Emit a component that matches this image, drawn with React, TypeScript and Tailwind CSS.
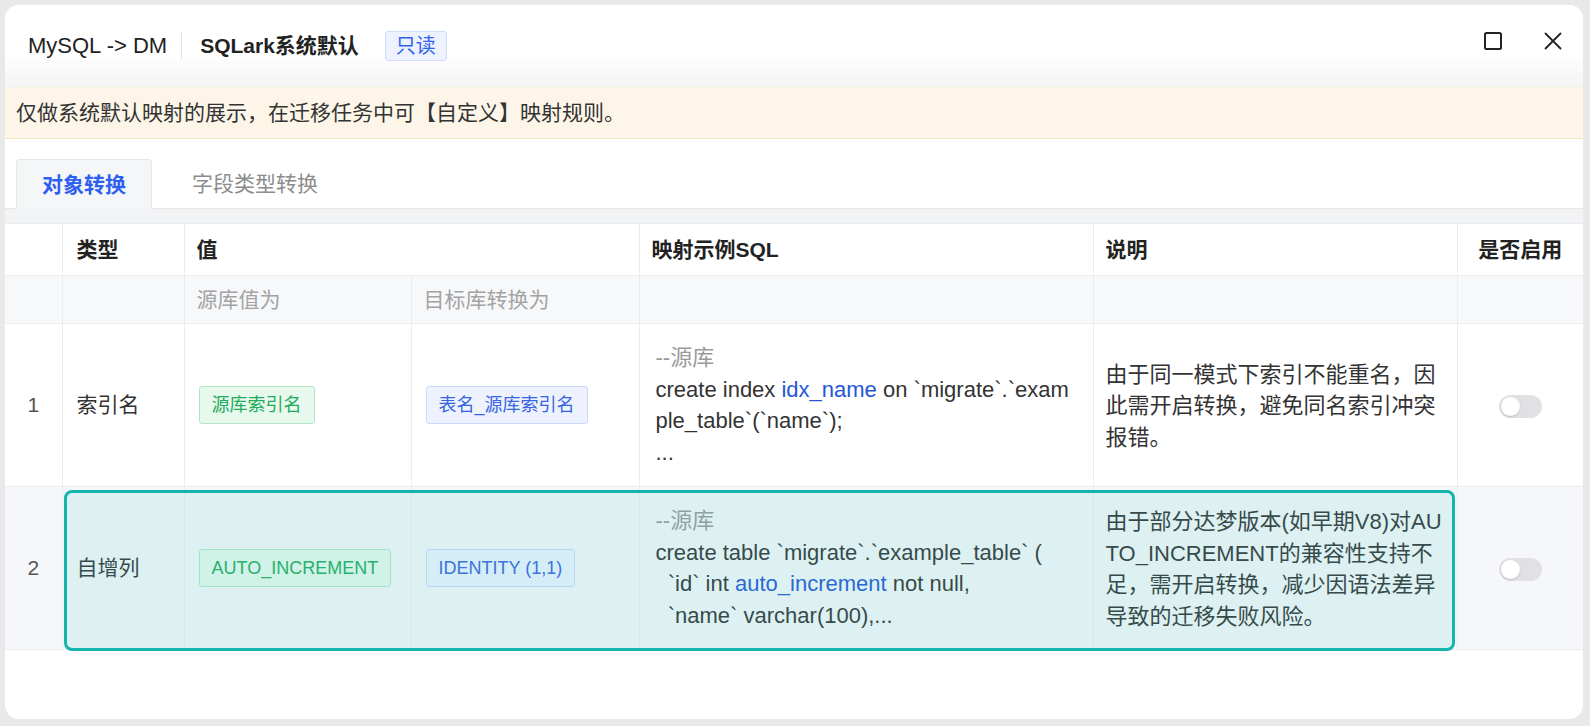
import type { ReactNode } from "react";

const line = "border-[#ebedf0]";

function Tag({ tone, children }: { readonly tone: "green" | "blue"; readonly children: ReactNode }) {
    const styles =
        tone === "green"
            ? "border-[#b1e6c5] bg-[#e7f8ed] text-[#22ab5c]"
            : "border-[#cbd9fa] bg-[#edf2fe] text-[#3764e0]";
    return (
        <span className={`inline-block rounded-[3px] border px-3 py-[5px] text-[18px] leading-[26px] ${styles}`}>
            {children}
        </span>
    );
}

function Toggle() {
    return (
        <span className="relative inline-block h-[23px] w-[43px] rounded-full bg-[#e1e1e4] align-middle">
            <span className="absolute left-[2px] top-[2px] h-[19px] w-[19px] rounded-full bg-white shadow-[0_1px_2px_rgba(0,0,0,0.15)]" />
        </span>
    );
}

function Kw({ children }: { readonly children: ReactNode }) {
    return <span className="text-[#2457d6]">{children}</span>;
}

type Row = {
    readonly index: string;
    readonly type: string;
    readonly source: string;
    readonly target: string;
    readonly sql: ReactNode[];
    readonly note: string;
    readonly hovered?: boolean;
};

const rows: Row[] = [
    {
        index: "1",
        type: "索引名",
        source: "源库索引名",
        target: "表名_源库索引名",
        sql: [
            <>
                create index <Kw>idx_name</Kw> on `migrate`.`example_table`(`name`);
            </>,
            "...",
        ],
        note: "由于同一模式下索引不能重名，因此需开启转换，避免同名索引冲突报错。",
    },
    {
        index: "2",
        type: "自增列",
        source: "AUTO_INCREMENT",
        target: "IDENTITY (1,1)",
        sql: [
            "create table `migrate`.`example_table` (",
            <>
                {"  `id` int "}
                <Kw>auto_increment</Kw> not null,
            </>,
            "  `name` varchar(100),...",
        ],
        note: "由于部分达梦版本(如早期V8)对AUTO_INCREMENT的兼容性支持不足，需开启转换，减少因语法差异导致的迁移失败风险。",
        hovered: true,
    },
];

export default function App() {
    return (
        <div className="h-[726px] w-full bg-[#e9e9e9] pb-[7px] pl-[5px] pr-[7px] pt-[5px] font-['Liberation_Sans','Noto_Sans_CJK_SC',sans-serif] text-[#333]">
            <div className="flex h-full flex-col overflow-hidden rounded-[14px] bg-white">
                {/* header */}
                <div className="flex h-[82px] shrink-0 items-center border-b border-[#efefef] bg-gradient-to-b from-white from-60% to-[#f4f4f4] pl-[23px] pr-[21px]">
                    <span className="text-[22px] text-[#222]">MySQL -&gt; DM</span>
                    <span className="ml-[14px] mr-[18px] h-[26px] w-px bg-[#e2e2e2]" />
                    <span className="text-[21px] font-bold text-[#222]">SQLark系统默认</span>
                    <span className="ml-[26px] rounded-[3px] border border-[#cfdcfb] bg-[#edf2fe] px-[10px] text-[20px] leading-[28px] text-[#2f63f0]">
                        只读
                    </span>
                    <div className="-mt-[9px] ml-auto flex items-center gap-[42px] text-[#222]">
                        <svg width="18" height="18" viewBox="0 0 18 18" fill="none">
                            <rect x="1" y="1" width="16" height="16" rx="1.5" stroke="currentColor" strokeWidth="2" />
                        </svg>
                        <svg width="18" height="18" viewBox="0 0 18 18" fill="none">
                            <path d="M1.5 1.5L16.5 16.5M16.5 1.5L1.5 16.5" stroke="currentColor" strokeWidth="1.8" strokeLinecap="round" />
                        </svg>
                    </div>
                </div>

                {/* notice */}
                <div className="flex h-[52px] shrink-0 items-center border-b border-[#f6e3c0] bg-[#fdf6e8] pl-[11px] text-[21px]">
                    仅做系统默认映射的展示，在迁移任务中可【自定义】映射规则。
                </div>

                {/* tabs */}
                <div className="mt-[20px] flex h-[50px] shrink-0 items-end border-b border-[#e6e6e6] pl-[11px]">
                    <div className="-mb-px flex h-[50px] w-[136px] items-center justify-center rounded-t-[4px] border border-b-0 border-[#e6e6e6] bg-[#f5f6f8] text-[21px] font-semibold text-[#2f5ff0]">
                        对象转换
                    </div>
                    <div className="ml-[14px] flex h-[49px] items-center px-[26px] text-[21px] text-[#8c8c8c]">
                        字段类型转换
                    </div>
                </div>
                <div className="h-[14px] shrink-0 bg-[#f2f3f5]" />

                {/* table */}
                <div className="relative">
                    <table className="w-full table-fixed border-collapse text-[21px]">
                        <colgroup>
                            <col className="w-[57px]" />
                            <col className="w-[122px]" />
                            <col className="w-[227px]" />
                            <col className="w-[228px]" />
                            <col className="w-[454px]" />
                            <col className="w-[364px]" />
                            <col />
                        </colgroup>
                        <thead>
                            <tr className={`h-[52px] border-t bg-white text-left font-bold text-[#222] ${line}`}>
                                <th className={`border-b border-r ${line}`} />
                                <th className={`border-b border-r px-[14px] ${line}`}>类型</th>
                                <th colSpan={2} className={`border-b border-r px-3 ${line}`}>
                                    值
                                </th>
                                <th className={`border-b border-r px-3 ${line}`}>映射示例SQL</th>
                                <th className={`border-b border-r px-3 ${line}`}>说明</th>
                                <th className={`border-b text-center ${line}`}>是否启用</th>
                            </tr>
                            <tr className="h-[48px] bg-[#f7f8fa] text-left font-normal text-[#a3a3a3]">
                                <th className={`border-b border-r ${line}`} />
                                <th className={`border-b border-r ${line}`} />
                                <th className={`border-b border-r px-3 font-normal ${line}`}>源库值为</th>
                                <th className={`border-b border-r px-3 font-normal ${line}`}>目标库转换为</th>
                                <th className={`border-b border-r ${line}`} />
                                <th className={`border-b border-r ${line}`} />
                                <th className={`border-b ${line}`} />
                            </tr>
                        </thead>
                        <tbody>
                            {rows.map((row) => (
                                <tr key={row.index} className={row.hovered ? "bg-[#f6f7fb]" : "bg-white"}>
                                    <td className={`border-b border-r text-center text-[#555] ${line}`}>{row.index}</td>
                                    <td className={`border-b border-r px-[14px] ${line}`}>{row.type}</td>
                                    <td className={`border-b border-r px-[14px] ${line}`}>
                                        <Tag tone="green">{row.source}</Tag>
                                    </td>
                                    <td className={`border-b border-r px-[14px] ${line}`}>
                                        <Tag tone="blue">{row.target}</Tag>
                                    </td>
                                    <td className={`border-b border-r px-4 py-[18px] text-[22px] leading-[31.5px] ${line}`}>
                                        <div className="text-[#9a9a9a]">--源库</div>
                                        {row.sql.map((part, i) => (
                                            <div key={i} className="whitespace-pre-wrap break-all">
                                                {part}
                                            </div>
                                        ))}
                                    </td>
                                    <td className={`break-all border-b border-r px-3 pt-[2px] text-[22px] leading-[31.5px] ${line}`}>
                                        {row.note}
                                    </td>
                                    <td className={`border-b text-center ${line}`}>
                                        <Toggle />
                                    </td>
                                </tr>
                            ))}
                        </tbody>
                    </table>
                    <div className="pointer-events-none absolute left-[59px] top-[267px] h-[161px] w-[1391px] rounded-[8px] border-[3px] border-[#13b5ad] bg-[rgba(78,206,203,0.15)]" />
                </div>
            </div>
        </div>
    );
}
